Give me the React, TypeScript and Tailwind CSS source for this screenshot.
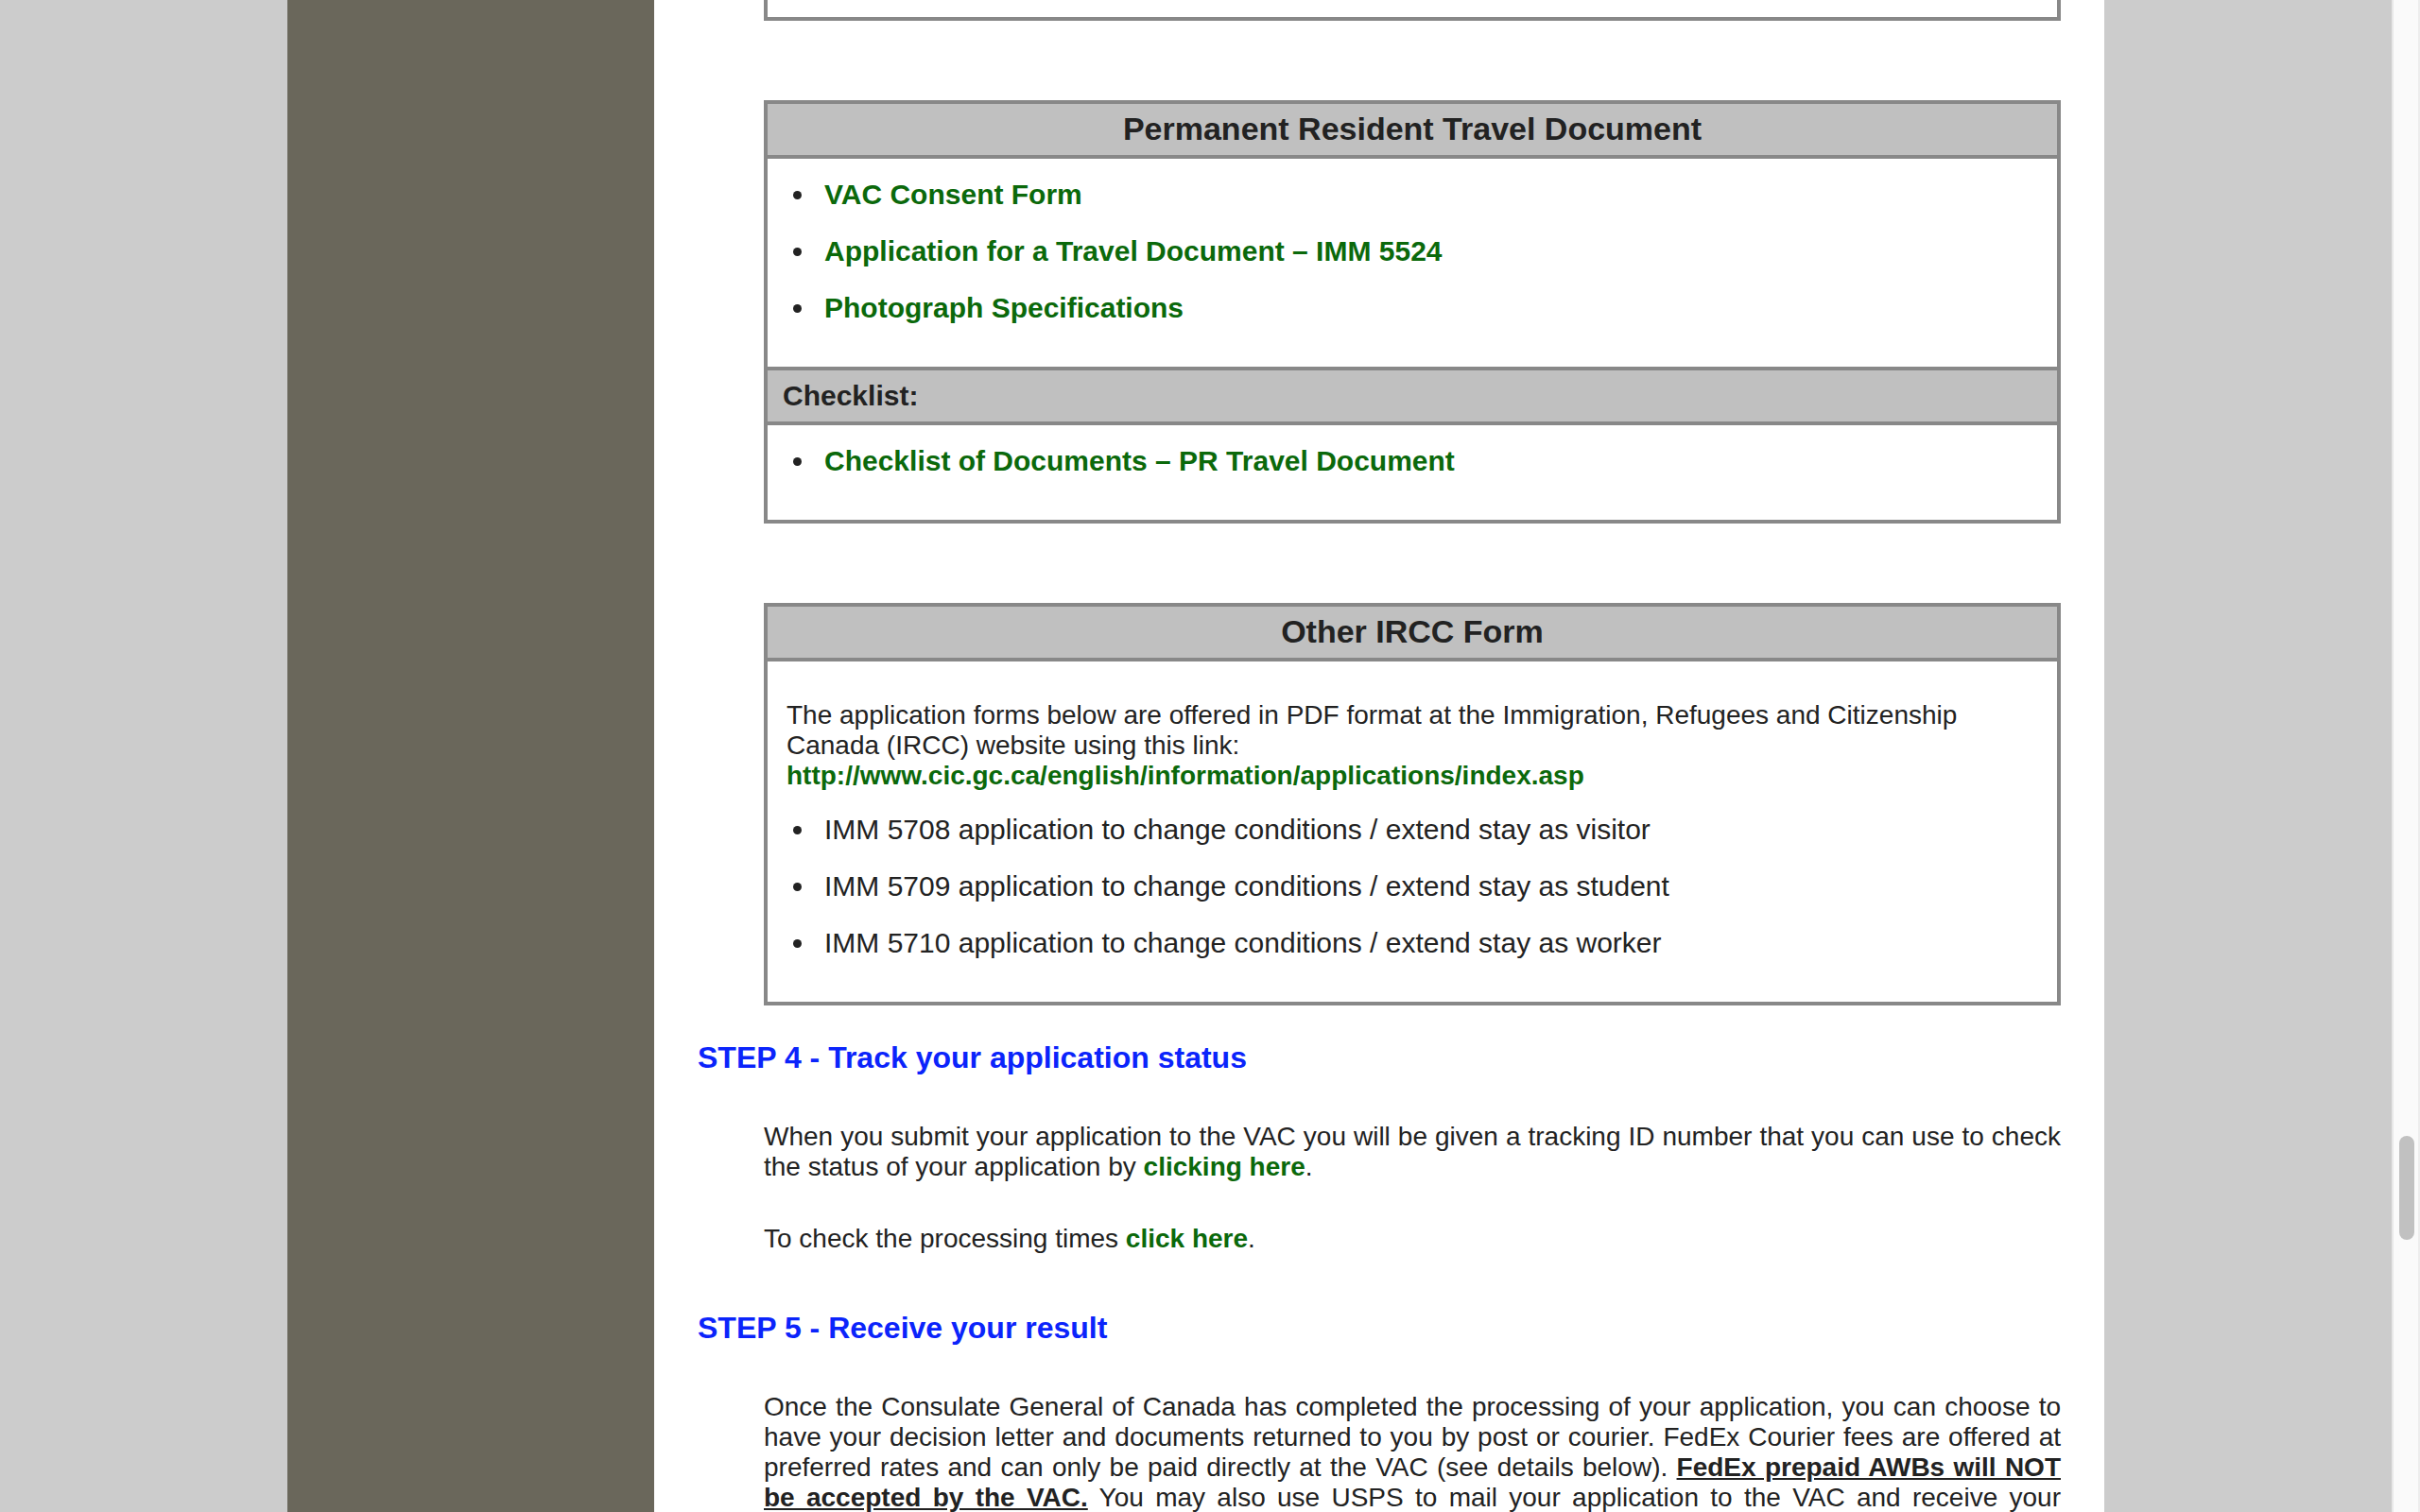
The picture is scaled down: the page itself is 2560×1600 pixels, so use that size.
import type { ReactNode } from "react";

function FormBox({ children }: { children: ReactNode }) {
  return (
    <section className="ml-[70px] divide-y-4 divide-[#888888] border-4 border-[#888888]">
      {children}
    </section>
  );
}

function BoxTitle({ children }: { children: ReactNode }) {
  return (
    <h2 className="bg-[#c0c0c0] px-4 pb-0.5 text-center text-[34px] leading-[52px] font-bold">{children}</h2>
  );
}

function BulletList({ children }: { children: ReactNode }) {
  return <ul className="list-disc pt-2 pr-4 pb-8 pl-13 text-[30px] leading-[60px]">{children}</ul>;
}

function BulletItem({ children }: { children: ReactNode }) {
  return <li className="pl-2">{children}</li>;
}

function GreenLink({ href = "#", children }: { href?: string; children: ReactNode }) {
  return (
    <a href={href} className="font-bold text-[#0b690b] hover:underline">
      {children}
    </a>
  );
}

function StepHeading({ children }: { children: ReactNode }) {
  return <h2 className="text-[32px] leading-10 font-bold text-[#0b24fb]">{children}</h2>;
}

const travelForms = ["VAC Consent Form", "Application for a Travel Document – IMM 5524", "Photograph Specifications"];

const extensionForms = [
  "IMM 5708 application to change conditions / extend stay as visitor",
  "IMM 5709 application to change conditions / extend stay as student",
  "IMM 5710 application to change conditions / extend stay as worker",
];

export default function App() {
  return (
    <div className="flex h-screen overflow-hidden bg-[#cccccc] font-['Liberation_Sans',Arial,sans-serif] text-[28px] leading-8 text-[#222222]">
      <div className="flex min-w-0 flex-1 justify-center">
        <div className="flex w-full max-w-[1922px]">
          <aside className="w-[388px] shrink-0 bg-[#6a675b]" />
          <main className="min-w-0 flex-1 bg-white px-[46px]">
            <div className="ml-[70px] h-[22px] border-4 border-t-0 border-[#888888]" />

            <div className="mt-[84px]">
              <FormBox>
                <BoxTitle>Permanent Resident Travel Document</BoxTitle>
                <BulletList>
                  {travelForms.map((name) => (
                    <BulletItem key={name}>
                      <GreenLink>{name}</GreenLink>
                    </BulletItem>
                  ))}
                </BulletList>
                <h3 className="bg-[#c0c0c0] px-4 text-[30px] leading-[54px] font-bold">Checklist:</h3>
                <BulletList>
                  <BulletItem>
                    <GreenLink>Checklist of Documents – PR Travel Document</GreenLink>
                  </BulletItem>
                </BulletList>
              </FormBox>
            </div>

            <div className="mt-[84px]">
              <FormBox>
                <BoxTitle>Other IRCC Form</BoxTitle>
                <div>
                  <p className="px-5 pt-[41px] pb-[3px]">
                    The application forms below are offered in PDF format at the Immigration, Refugees and Citizenship
                    Canada (IRCC) website using this link:
                    <br />
                    <GreenLink href="http://www.cic.gc.ca/english/information/applications/index.asp">
                      http://www.cic.gc.ca/english/information/applications/index.asp
                    </GreenLink>
                  </p>
                  <BulletList>
                    {extensionForms.map((name) => (
                      <BulletItem key={name}>{name}</BulletItem>
                    ))}
                  </BulletList>
                </div>
              </FormBox>
            </div>

            <section className="mt-[35px]">
              <StepHeading>STEP 4 - Track your application status</StepHeading>
              <div className="mt-12 ml-[70px] space-y-11 text-justify">
                <p>
                  When you submit your application to the VAC you will be given a tracking ID number that you can use to
                  check the status of your application by <GreenLink>clicking here</GreenLink>.
                </p>
                <p>
                  To check the processing times <GreenLink>click here</GreenLink>.
                </p>
              </div>
            </section>

            <section className="mt-[58px]">
              <StepHeading>STEP 5 - Receive your result</StepHeading>
              <p className="mt-12 ml-[70px] text-justify [text-align-last:justify]">
                Once the Consulate General of Canada has completed the processing of your application, you can choose to
                have your decision letter and documents returned to you by post or courier. FedEx Courier fees are
                offered at preferred rates and can only be paid directly at the VAC (see details below).{" "}
                <strong className="underline">FedEx prepaid AWBs will NOT be accepted by the VAC.</strong> You may also
                use USPS to mail your application to the VAC and receive your
              </p>
            </section>
          </main>
        </div>
      </div>
      <div className="w-[30px] shrink-0 border-x-2 border-[#e8e8e8] border-r-[#ededed] bg-[#fafafa] pt-[1202px] pl-1.5">
        <div className="h-[110px] w-4 rounded-full bg-[#c1c1c1]" />
      </div>
    </div>
  );
}
